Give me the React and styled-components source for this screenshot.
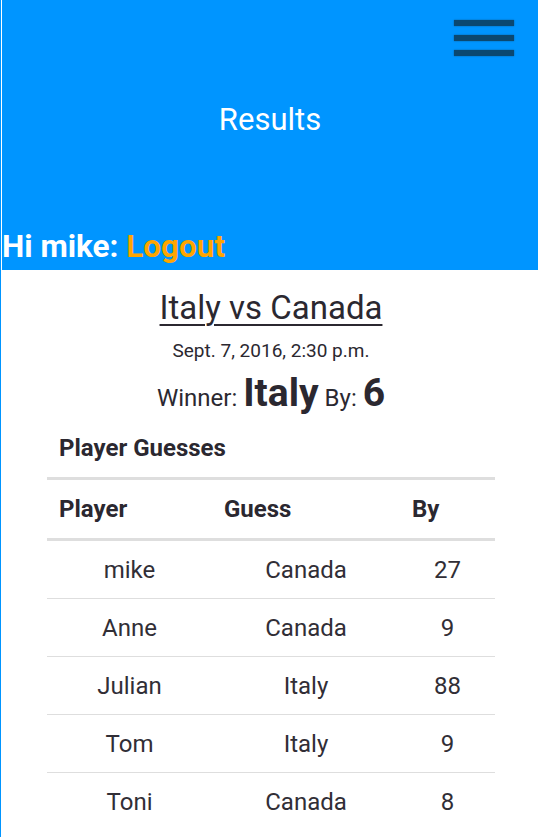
import styled, { createGlobalStyle } from 'styled-components';

const GlobalStyle = createGlobalStyle`
  html, body {
    margin: 0;
    padding: 0;
    background: #fff;
  }
  body {
    font-family: Roboto, "Liberation Sans", sans-serif;
    color: #2b2830;
  }
`;

const guesses = [
  { player: 'mike', guess: 'Canada', by: 27 },
  { player: 'Anne', guess: 'Canada', by: 9 },
  { player: 'Julian', guess: 'Italy', by: 88 },
  { player: 'Tom', guess: 'Italy', by: 9 },
  { player: 'Toni', guess: 'Canada', by: 8 },
];

export default function App() {
  return (
    <Page>
      <GlobalStyle />
      <Header>
        <MenuButton aria-label="menu">
          <span />
          <span />
          <span />
        </MenuButton>
        <PageTitle>Results</PageTitle>
        <Greeting>
          Hi mike: <a href="#">Logout</a>
        </Greeting>
      </Header>
      <Main>
        <MatchTitle>Italy vs Canada</MatchTitle>
        <MatchDate>Sept. 7, 2016, 2:30 p.m.</MatchDate>
        <Winner>
          Winner: <strong>Italy</strong> By: <strong>6</strong>
        </Winner>
        <Section>
          <h3>Player Guesses</h3>
          <Table>
            <colgroup>
              <col style={{ width: 165 }} />
              <col style={{ width: 188 }} />
              <col />
            </colgroup>
            <thead>
              <tr>
                <th>Player</th>
                <th>Guess</th>
                <th>By</th>
              </tr>
            </thead>
            <tbody>
              {guesses.map((g) => (
                <tr key={g.player}>
                  <td>{g.player}</td>
                  <td>{g.guess}</td>
                  <td>{g.by}</td>
                </tr>
              ))}
            </tbody>
          </Table>
        </Section>
      </Main>
    </Page>
  );
}

const Page = styled.div`
  border-left: 1px solid #0095ff;
  padding-left: 1px;
  min-height: 837px;
  box-sizing: border-box;
`;

const Header = styled.header`
  background: #0095ff;
  height: 270px;
  position: relative;
  display: flex;
  flex-direction: column;
  justify-content: space-between;
  padding-top: 100px;
  box-sizing: border-box;
`;

const MenuButton = styled.div`
  position: absolute;
  top: 20px;
  right: 24px;
  width: 60px;
  display: flex;
  flex-direction: column;
  gap: 9.5px;

  span {
    display: block;
    height: 5.5px;
    background: #0b4870;
    box-shadow: 0 0 1.5px #0b4870;
  }
`;

const PageTitle = styled.h1`
  margin: 0;
  text-align: center;
  color: #fff;
  font-size: 31px;
  font-weight: 400;
  line-height: 40px;
`;

const Greeting = styled.div`
  color: #fff;
  font-size: 31.5px;
  font-weight: 700;
  line-height: 36px;
  padding-bottom: 5px;

  a {
    color: #ffa500;
    text-decoration: none;
  }
`;

const Main = styled.main`
  padding: 18px 43px 0 45px;
  display: flex;
  flex-direction: column;
  align-items: center;
`;

const MatchTitle = styled.h2`
  margin: 0;
  font-size: 33px;
  font-weight: 400;
  line-height: 40px;
  text-decoration: underline;
  text-decoration-thickness: 2px;
  text-underline-offset: 5px;
`;

const MatchDate = styled.div`
  margin-top: 12px;
  font-size: 19px;
  line-height: 22px;
`;

const Winner = styled.div`
  margin-top: 8px;
  font-size: 24px;
  line-height: 46px;

  strong {
    font-size: 39px;
    font-weight: 700;
  }
`;

const Section = styled.section`
  align-self: stretch;
  margin-top: 12px;

  h3 {
    margin: 0 0 0 12px;
    font-size: 24px;
    font-weight: 700;
    line-height: 30px;
  }
`;

const Table = styled.table`
  width: 100%;
  margin-top: 14px;
  border-collapse: collapse;
  table-layout: fixed;
  font-size: 24px;

  th {
    text-align: left;
    font-weight: 700;
    padding: 0 12px;
    height: 58px;
    border-top: 3px solid #dedede;
    border-bottom: 3px solid #dedede;
  }

  td {
    text-align: center;
    height: 57px;
    padding: 0;
    color: #312e36;
    border-bottom: 1px solid #dedede;
  }

  tbody tr:last-child td { border-bottom: none; }
`;
